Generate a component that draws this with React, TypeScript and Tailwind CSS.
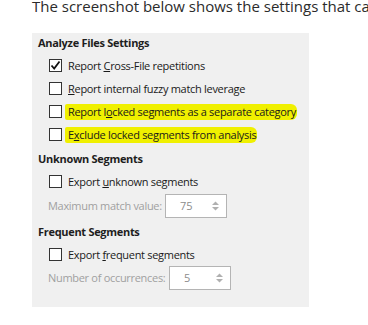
import React from "react";

const font = { fontFamily: '"Open Sans", "Noto Sans", sans-serif' };

function Check({ checked }: { checked?: boolean }) {
  return (
    <span className="w-[13px] h-[13px] border border-[#333333] bg-white flex items-center justify-center shrink-0">
      {checked && (
        <svg width="11" height="11" viewBox="0 0 11 11">
          <polyline points="1.5,5.5 4.2,8.5 9.5,1.5" fill="none" stroke="#111" strokeWidth="1.8" />
        </svg>
      )}
    </span>
  );
}

function Row({ checked, children }: { checked?: boolean; children: React.ReactNode }) {
  return (
    <div className="h-[23px] flex items-center pl-[17px] gap-[6px]">
      <Check checked={checked} />
      <span className="text-[11px] tracking-[-0.3px] text-[#1a1a1a] leading-[15px] whitespace-nowrap">{children}</span>
    </div>
  );
}

function Marked({ children }: { children: React.ReactNode }) {
  return (
    <span className="inline-block bg-[#f0f000] -ml-[3px] pl-[3px] pr-[1px] rounded-l-[2px] rounded-r-[6px] leading-[16px]">
      {children}
    </span>
  );
}

function Spin({ label, value, labelW }: { label: string; value: string; labelW: string }) {
  return (
    <div className="flex items-center pl-[16px]">
      <span className={`${labelW} text-[11px] tracking-[-0.3px] text-[#a0a0a0] whitespace-nowrap`}>{label}</span>
      <div className="w-[62px] h-[24px] border border-[#b4b4b4] bg-white flex items-center pl-[14px] pr-[6px]">
        <span className="flex-1 text-[11px] text-[#8c8c8c]">{value}</span>
        <svg width="9" height="10" viewBox="0 0 9 10">
          <polygon points="1,4 8,4 4.5,0.5" fill="#b0b0b0" />
          <polygon points="1,6 8,6 4.5,9.5" fill="#b0b0b0" />
        </svg>
      </div>
    </div>
  );
}

function Heading({ children, className }: { children: React.ReactNode; className: string }) {
  return (
    <div className={`${className} flex items-center pl-[6px] text-[11px] tracking-[-0.3px] font-bold text-[#1e1e1e]`}>
      {children}
    </div>
  );
}

export default function App() {
  return (
    <div className="w-[368px] h-[325px] bg-white overflow-hidden" style={font}>
      <div className="pl-[32px] -mt-[3px] h-[20px] text-[15px] leading-[18px] text-[#2b2b2b] whitespace-nowrap">
        The screenshot below shows the settings that can be changed
      </div>
      <div className="ml-[32px] mt-[16px] w-[277px] h-[274px] bg-[#f0f0f0] flex flex-col">
        <Heading className="h-[21px]">Analyze Files Settings</Heading>
        <Row checked>
          Report <u>C</u>ross-File repetitions
        </Row>
        <Row>
          <u>R</u>eport internal fuzzy match leverage
        </Row>
        <Row>
          <Marked>
            Report l<u>o</u>cked segments as a separate category
          </Marked>
        </Row>
        <Row>
          <Marked>
            E<u>x</u>clude locked segments from analysis
          </Marked>
        </Row>
        <Heading className="mt-[2px] h-[22px]">Unknown Segments</Heading>
        <Row>
          Export <u>u</u>nknown segments
        </Row>
        <div className="mt-[1px]">
          <Spin label="Maximum match value:" value="75" labelW="w-[117px]" />
        </div>
        <Heading className="mt-[3px] h-[22px]">Frequent Segments</Heading>
        <Row>
          Export <u>f</u>requent segments
        </Row>
        <Spin label="Number of occurrences:" value="5" labelW="w-[121px]" />
      </div>
    </div>
  );
}
